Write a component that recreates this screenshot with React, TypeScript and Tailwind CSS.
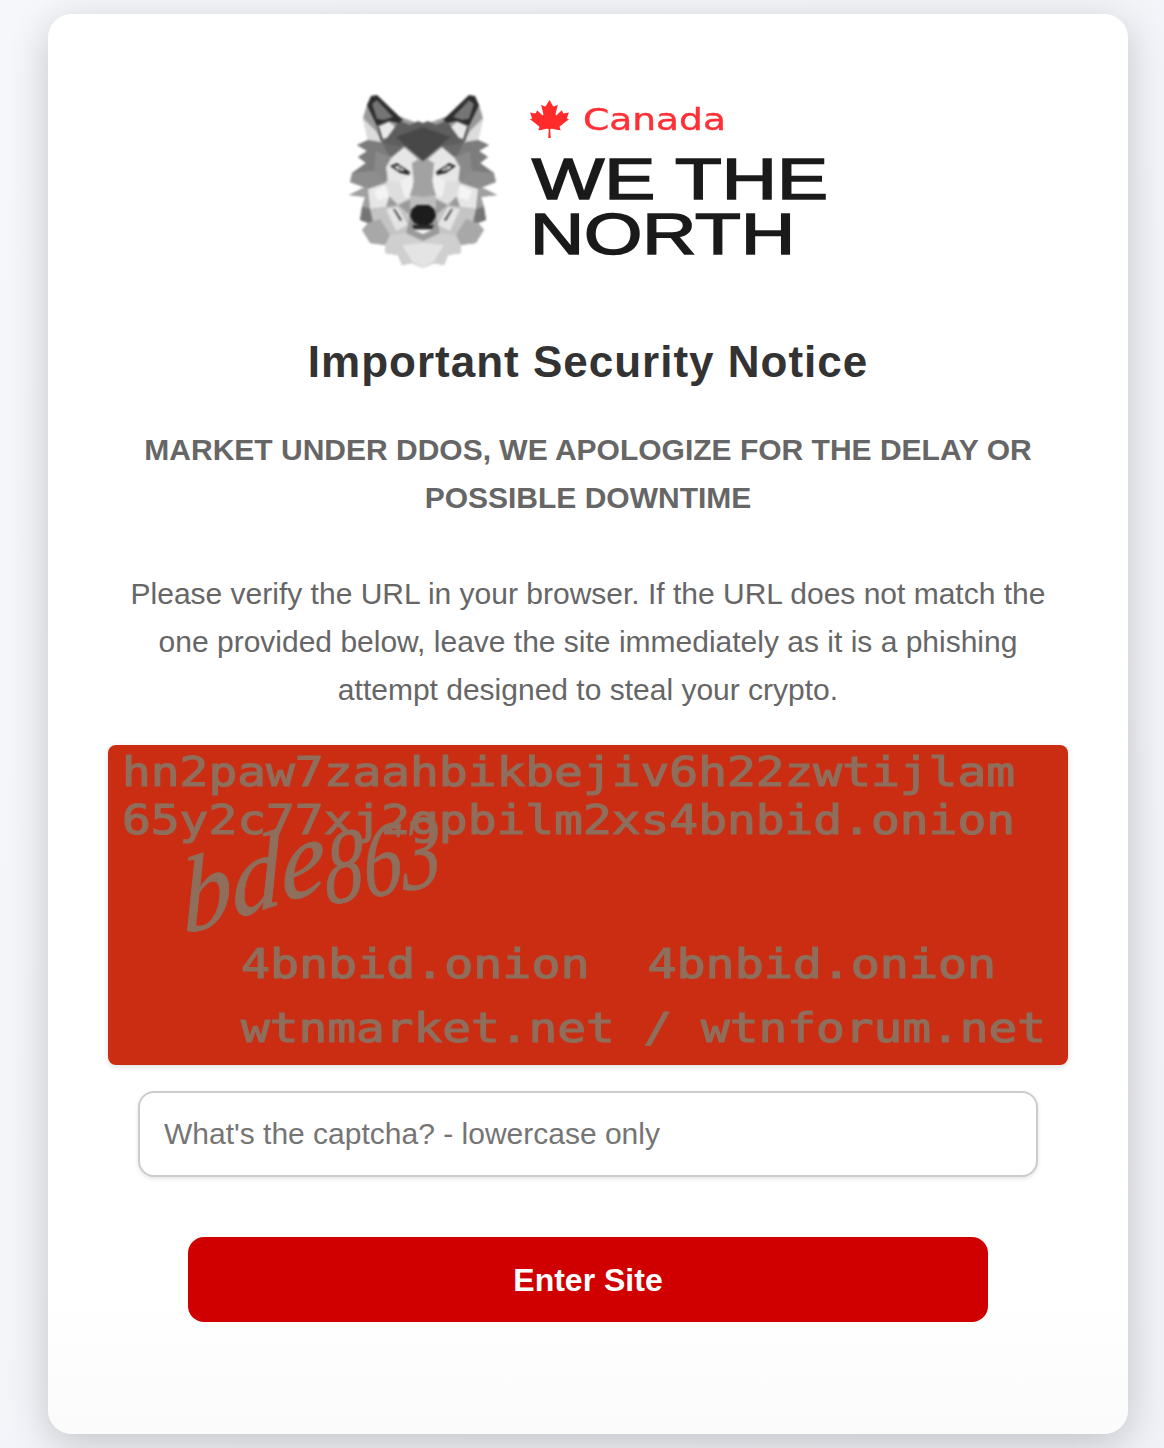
import React from "react";
import { FaCanadianMapleLeaf } from "react-icons/fa";

const half: [string, string][] = [
  // silhouette base
  ["27,20 23,33 28,55 17,60 27,66 18,72 26,78 12,88 25,90 10,97 25,102 9,110 25,112 22,122 20,135 28,138 22,145 33,150 30,158 45,160 45,168 58,170 62,180 72,178 83,183 83,40", "#9a9a9a"],
  // upper white fur
  ["23,33 36,46 44,60 30,62 27,52", "#dcdcdc"],
  // grey side fur
  ["28,55 46,58 50,70 36,86 12,88 26,78 18,72 27,66 17,60", "#7c7c7c"],
  ["12,88 36,86 46,96 28,104 10,97", "#8e8e8e"],
  ["25,102 30,104 28,120 22,122 25,112 9,110", "#a0a0a0"],
  // dark wedge under forehead
  ["40,54 64,62 70,70 50,72", "#6a6a6a"],
  ["36,66 50,72 46,96 34,86", "#8a8a8a"],
  // light around eye
  ["64,62 78,74 76,98 48,98 46,82 52,72", "#e6e6e6"],
  // below eye
  ["46,96 72,98 74,112 58,120 48,110", "#dedede"],
  ["60,96 72,90 74,112 64,112", "#f0f0f0"],
  // cheek
  ["28,104 46,98 50,110 46,122 30,124", "#e6e6e6"],
  ["34,106 46,100 48,112 38,116", "#f4f4f4"],
  ["22,122 30,124 40,134 28,138 20,135", "#757575"],
  // lower face
  ["30,124 46,122 58,120 70,130 66,150 46,152 34,142", "#c4c4c4"],
  ["46,124 58,122 68,140 56,146", "#e4e4e4"],
  ["28,138 40,134 50,150 45,160 30,158 22,145", "#a8a8a8"],
  ["50,150 66,148 83,156 83,183 72,178 62,180 58,170 45,168 45,160", "#cfcfcf"],
  ["62,160 83,158 83,183 72,176", "#e4e4e4"],
  // centre muzzle
  ["72,78 83,72 83,122 72,122 70,110 74,98", "#a2a2a2"],
  ["70,110 83,112 83,122 70,124", "#bdbdbd"],
  // forehead
  ["44,52 60,36 70,40 78,36 83,38 83,76 66,62 44,58", "#5e5e5e"],
  ["56,52 83,42 83,76", "#484848"],
  // ear
  ["27,20 31,11 37,10 63,35 58,38 49,36 37,41", "#2c2c2c"],
  ["32,19 37,15 53,32 44,35 37,34", "#757575"],
  ["38,42 49,37 55,42 47,53 42,54", "#e8e8e8"],
  ["37,41 39,42 43,55 41,56", "#444444"],
  // eye
  ["50,81 57,78 70,87 69,90 60,88", "#2a2a2a"],
  ["54,81 60,81 65,86 58,85", "#f2f2f2"],
  ["58,82 60,82 62,84 59,84", "#444444"],
  // muzzle line
  ["53,124 55,124 62,135 60,136", "#4a4a4a"],
];

function Wolf() {
  const polys = half.map(([p, fill], i) => <polygon key={i} points={p} fill={fill} />);
  return (
    <g transform="translate(2 11)">
      {polys}
      <g transform="translate(166 0) scale(-1 1)">{polys}</g>
      <polygon points="72,124 77,120 89,120 94,124 96,131 92,138 84,142 74,138 70,131" fill="#1c1c1c" />
      <polygon points="72,140 94,140 92,144 74,144" fill="#2a2a2a" />
      <polygon points="74,145 92,145 83,149" fill="#fafafa" />
    </g>
  );
}

function Logo() {
  return (
    <div className="relative h-[200px] w-[500px]">
      <svg width="500" height="200" viewBox="0 0 500 200" className="block" role="img" aria-label="Canada We The North">
        <g className="blur-[0.8px]">
          <Wolf />
        </g>
        <g className="blur-[0.3px]">
          <text x="245" y="56" fill="#ff2f35" stroke="#ff2f35" strokeWidth="0.4" fontSize="30" textLength="143" lengthAdjust="spacingAndGlyphs" fontFamily="'DejaVu Sans', sans-serif">Canada</text>
          <text x="194" y="124.5" fill="#1a1a1a" fontSize="57" stroke="#1a1a1a" strokeWidth="1.6" textLength="296" lengthAdjust="spacingAndGlyphs" fontFamily="'Liberation Sans', sans-serif">WE THE</text>
          <text x="192" y="179.5" fill="#1a1a1a" fontSize="57" stroke="#1a1a1a" strokeWidth="1.6" textLength="265" lengthAdjust="spacingAndGlyphs" fontFamily="'Liberation Sans', sans-serif">NORTH</text>
        </g>
      </svg>
      <FaCanadianMapleLeaf preserveAspectRatio="none" className="absolute left-[190px] top-[26px] h-[38px] w-[43px] text-[#ff2a2a]" />
    </div>
  );
}

function Captcha() {
  return (
    <svg width="960" height="320" viewBox="0 0 960 320" className="block rounded-lg shadow-[0_2px_6px_rgba(0,0,0,0.12)]" role="img" aria-label="captcha">
      <rect width="960" height="320" fill="#cb2d13" />
      <g fill="#8f6e5c" stroke="#8f6e5c" strokeWidth="1.2" fontFamily="'DejaVu Sans Mono', monospace" fontSize="40" className="blur-[0.5px]">
        <text x="14" y="41" textLength="893" lengthAdjust="spacingAndGlyphs">hn2paw7zaahbikbejiv6h22zwtijlam</text>
        <text x="14" y="89" textLength="893" lengthAdjust="spacingAndGlyphs">65y2c77xj2gpbilm2xs4bnbid.onion</text>
        <text x="133" y="233" xmlSpace="preserve" textLength="755" lengthAdjust="spacingAndGlyphs">4bnbid.onion  4bnbid.onion</text>
        <text x="133" y="297" xmlSpace="preserve" textLength="805" lengthAdjust="spacingAndGlyphs">wtnmarket.net / wtnforum.net</text>
        <text transform="translate(76 190) rotate(-18) skewX(-15)" fontFamily="'Liberation Serif', serif" fontStyle="italic" fontSize="104" textLength="150" lengthAdjust="spacingAndGlyphs" strokeWidth="1">bde</text>
        <text transform="translate(218 160) rotate(-10) skewX(-8)" fontFamily="'Liberation Serif', serif" fontStyle="italic" fontSize="105" textLength="118" lengthAdjust="spacingAndGlyphs" strokeWidth="0.8">863</text>
      </g>
    </svg>
  );
}

export default function App() {
  return (
    <div className="min-h-[1448px] bg-gradient-to-br from-[#f5f7fa] to-[#f0f2f8] py-[14px] pl-[48px] font-['Liberation_Sans',Arial,sans-serif]">
      <div className="flex h-[1420px] w-[1080px] flex-col items-center rounded-[24px] bg-gradient-to-b from-white from-90% to-[#fbfbfb] px-[60px] pt-[60px] shadow-[0_10px_40px_rgba(0,0,0,0.2)]">
        <Logo />
        <h1 className="mt-[60px] text-[44px] font-bold leading-[56px] tracking-[1px] text-[#333333]">Important Security Notice</h1>
        <h2 className="mt-[36px] w-full text-center text-[30px] font-bold leading-[48px] text-[#666666]">
          MARKET UNDER DDOS, WE APOLOGIZE FOR THE DELAY OR POSSIBLE DOWNTIME
        </h2>
        <p className="mt-[48px] w-full text-center text-[30px] leading-[48px] text-[#666666]">
          Please verify the URL in your browser. If the URL does not match the one provided below, leave the site immediately as it is a phishing attempt designed to steal your crypto.
        </p>
        <div className="mt-[31px]">
          <Captcha />
        </div>
        <input
          type="text"
          placeholder="What's the captcha? - lowercase only"
          className="mt-[26px] h-[86px] w-[900px] rounded-[16px] border-2 border-[#cccccc] bg-white px-6 text-[30px] text-[#333333] shadow-[0_2px_4px_rgba(0,0,0,0.1)] outline-none placeholder:text-[#757575]"
        />
        <button className="mt-[60px] h-[85px] w-[800px] rounded-[16px] bg-[#d00000] text-[32px] font-bold text-white">Enter Site</button>
      </div>
    </div>
  );
}
